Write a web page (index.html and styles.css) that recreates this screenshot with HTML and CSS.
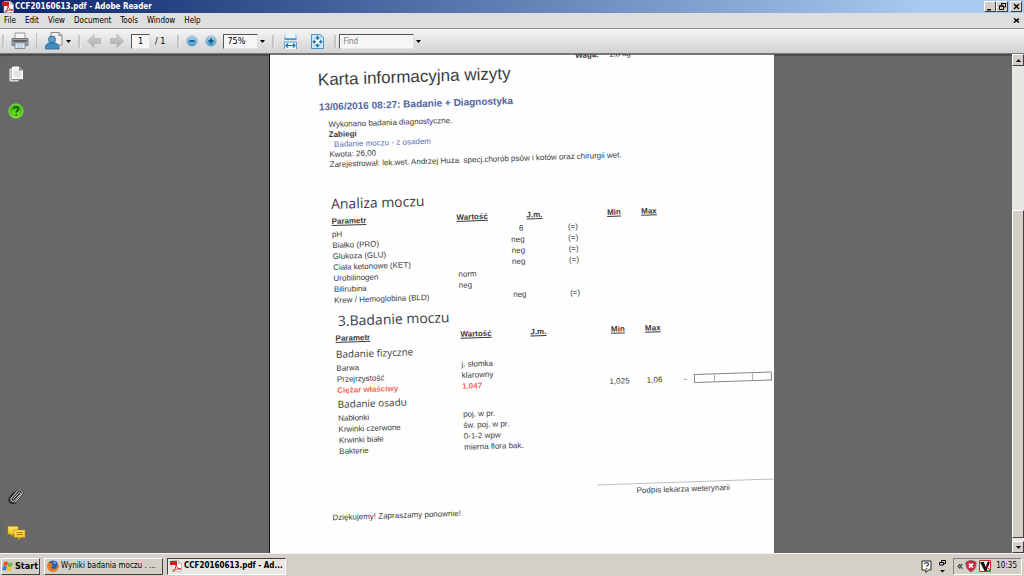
FILE: index.html
```html
<!DOCTYPE html>
<html lang="pl">
<head>
<meta charset="utf-8">
<title>CCF20160613.pdf - Adobe Reader</title>
<link rel="stylesheet" href="styles.css">
</head>
<body>
<svg class="defs" width="0" height="0" aria-hidden="true">
  <defs>
    <linearGradient id="blue" x1="0" y1="0" x2="0" y2="1"><stop offset="0" stop-color="#a9d8f2"/><stop offset="1" stop-color="#4396cc"/></linearGradient>
    <linearGradient id="grey" x1="0" y1="0" x2="0" y2="1"><stop offset="0" stop-color="#d4d4d4"/><stop offset="1" stop-color="#a8a8a8"/></linearGradient>
    <radialGradient id="green" cx=".5" cy=".7"><stop offset="0" stop-color="#7dec22"/><stop offset="1" stop-color="#3fb80d"/></radialGradient>
    <linearGradient id="gold" x1="0" y1="0" x2="0" y2="1"><stop offset="0" stop-color="#ffe66b"/><stop offset="1" stop-color="#f0b90f"/></linearGradient>
    <symbol id="pdf" viewBox="0 0 12 12">
      <path d="M2 .5h6.500l3 3v8H2z" fill="#fff" stroke="#aaa" stroke-width=".7"/>
      <path d="M8.500.5v3h3" fill="#ddd" stroke="#aaa" stroke-width=".7"/>
      <path d="M0 1h7v4H0z" fill="#d01c1c"/>
      <path d="M3 11c2-2 3-4 3-6 .3 2 2 4 5 4-3-.4-6 .5-8 2" fill="none" stroke="#d01c1c" stroke-width="1"/>
    </symbol>
  </defs>
</svg>
<div class="window">
  <header class="titlebar">
    <svg class="app-icon"><use href="#pdf"/></svg>
    <span class="title">CCF20160613.pdf - Adobe Reader</span>
    <button class="win-btn" aria-label="Minimize"><svg viewBox="0 0 9 9"><path d="M1 7h4v1.500H1z"/></svg></button>
    <button class="win-btn" aria-label="Restore"><svg viewBox="0 0 9 9"><path d="M3.500 3V1.500h4v3.500H6M1.500 4h4v3.500h-4z" fill="none" stroke="#000"/><path d="M3 1h5v1H3zM1 3.500h5v1H1z"/></svg></button>
    <button class="win-btn close" aria-label="Close"><svg viewBox="0 0 9 9"><path d="M2 2l5 5M7 2l-5 5" stroke="#000" stroke-width="1.300"/></svg></button>
  </header>
  <nav class="menubar">
    <button>File</button><button>Edit</button><button>View</button><button>Document</button><button>Tools</button><button>Window</button><button>Help</button>
    <button class="doc-close" aria-label="Close document"><svg viewBox="0 0 7 7"><path d="M1 1.500l5 4M6 1.500l-5 4" stroke="#000" stroke-width="1.600"/></svg></button>
  </nav>
  <div class="toolbar">
    <div class="group">
      <i class="grip"></i>
      <button class="tool print" aria-label="Print"><svg viewBox="0 0 18 18"><path d="M4 1h10v6H4z" fill="#f5f5f5" stroke="#999"/><path d="M1 6.500h16v7H1z" fill="#9ba2a7" stroke="#777e83"/><path d="M2 8h14v2H2z" fill="#5c6367"/><path d="M4 11h10v5.500H4z" fill="#fbfbfb" stroke="#888"/><path d="M5.500 13h7M5.500 15h7" stroke="#7db4d8"/></svg></button>
      <i class="rule"></i>
      <button class="tool share" aria-label="Collaborate"><svg viewBox="0 0 18 18"><path d="M6 .5h8l3 3V13H6z" fill="#eee" stroke="#8b8b8b"/><path d="M14 .5v3h3" fill="none" stroke="#8b8b8b"/><circle cx="7" cy="7.500" r="3.500" fill="#59a0d0" stroke="#25648f" stroke-width=".8"/><path d="M.5 17v-3.500l3-2.500h7.500l3 2.500V17z" fill="#3f8cc2" stroke="#25648f" stroke-width=".8"/></svg></button>
      <svg class="caret" viewBox="0 0 5 3"><path d="M0 0h5L2.500 3z"/></svg>
    </div>
    <div class="group">
      <i class="grip"></i>
      <button class="tool back" aria-label="Previous page"><svg viewBox="0 0 14 14"><path d="M.5 7l6.500-6.500v4h6.500v5H7v4z" fill="url(#grey)" stroke="#b8b8b8"/></svg></button>
      <button class="tool next" aria-label="Next page"><svg viewBox="0 0 14 14"><path d="M13.500 7L7 .5v4H.5v5H7v4z" fill="url(#grey)" stroke="#b8b8b8"/></svg></button>
      <input class="field page-no" type="text" value="1" aria-label="Page">
      <span class="page-count">/ 1</span>
    </div>
    <div class="group">
      <i class="grip"></i>
      <button class="tool round" aria-label="Zoom out"><svg viewBox="0 0 12 12"><circle cx="6" cy="6" r="5.300" fill="url(#blue)" stroke="#9ab4c4" stroke-width=".8"/><path d="M3.300 6h5.400" stroke="#0d4f82" stroke-width="1.600"/></svg></button>
      <button class="tool round" aria-label="Zoom in"><svg viewBox="0 0 12 12"><circle cx="6" cy="6" r="5.300" fill="url(#blue)" stroke="#9ab4c4" stroke-width=".8"/><path d="M3.300 6h5.400M6 3.300v5.400" stroke="#0d4f82" stroke-width="1.600"/></svg></button>
      <select class="field zoom" aria-label="Zoom"><option>75%</option></select>
      <svg class="caret tight" viewBox="0 0 5 3"><path d="M0 0h5L2.500 3z"/></svg>
    </div>
    <div class="group">
      <i class="grip"></i>
      <button class="tool fit" aria-label="Fit width"><svg viewBox="0 0 13 15"><path d="M.5 0h12v6H.5z" fill="url(#blue)"/><path d="M1.500 0h10v4h-10z" fill="#eaf5fb"/><path d="M.5 15V8h12v7" fill="#edf7fc" stroke="#5ea3ce"/><path d="M2 11.500h9M4 9.500l-2 2 2 2M9 9.500l2 2-2 2" fill="none" stroke="#186fab" stroke-width="1.100"/></svg></button>
      <button class="tool fit" aria-label="Fit page"><svg viewBox="0 0 13 15"><path d="M.5.5h9l3 3v11H.5z" fill="#cfe7f5" stroke="#4a97c7"/><path d="M9.500.5v3h3z" fill="#7dbbe0"/><path d="M4 5.500h5v4.500H4z" fill="#fff"/><path d="M6.500 1.500L9 4.500H7.200V6H5.800V4.500H4zM6.500 13.500L4 10.700h1.800V9.500h1.400v1.200H9zM1.300 7.700L3.800 5.500V7H5v1.400H3.800V10zM11.700 7.700L9.200 5.500V7H8v1.400h1.200V10z" fill="#1f74ae"/></svg></button>
    </div>
    <div class="group">
      <i class="grip"></i>
      <input class="field find" type="text" placeholder="Find" aria-label="Find">
      <svg class="caret tight" viewBox="0 0 5 3"><path d="M0 0h5L2.500 3z"/></svg>
    </div>
  </div>
  <main class="viewer">
    <aside class="sidebar">
      <button class="side" aria-label="Pages"><svg viewBox="0 0 16 16"><path d="M2 3h8v12H2z" fill="#bbb" stroke="#eee"/><path d="M4.500 1H11l3.500 3.500v8.500h-10z" fill="#f2f2f2" stroke="#fff"/><path d="M4 13.500h11" stroke="#888"/><path d="M11 1v3.500h3.500z" fill="#777"/><path d="M6 6h7M6 8h7M6 10h7" stroke="#d4d4d4"/></svg></button>
      <button class="side help" aria-label="Help"><svg viewBox="0 0 16 16"><circle cx="8" cy="8" r="7" fill="url(#green)" stroke="#8df24d"/><path d="M5.700 6.300c0-3 4.700-2.700 4.700-.2 0 1.600-2.200 1.600-2.200 3.300M8.200 10.800v1.600" fill="none" stroke="#135a05" stroke-width="1.800"/></svg></button>
      <button class="side clip" aria-label="Attachments"><svg viewBox="0 0 16 16"><g fill="none" stroke-linecap="round" stroke-linejoin="round"><path d="M5.500 10.500l5-5.500c1.300-1.300 2.800.2 1.700 1.500l-5.500 6.300c-2 2-5-.3-3.300-2.600L9.500 2.800c2.400-2.400 6.300.6 4.300 3.400L7.500 14c-3 3-8-.8-5.500-4.300L6 5" stroke="#2e2e2e" stroke-width="2.200"/><path d="M5.500 10.500l5-5.500c1.300-1.300 2.800.2 1.700 1.500l-5.500 6.300c-2 2-5-.3-3.300-2.600L9.500 2.800c2.400-2.400 6.300.6 4.300 3.400L7.500 14" stroke="#dedede"/></g></svg></button>
      <button class="side" aria-label="Comments"><svg viewBox="0 0 16 16"><path d="M0 1.500h10v7.500H5.500l-2 2.500V9H0z" fill="url(#gold)" stroke="#d79b09" stroke-width=".6"/><path d="M6 5h11v7.500h-4.500l-2 3v-3H6z" fill="url(#gold)" stroke="#b98005" stroke-width=".6"/><path d="M8.500 7.500h6.500M8.500 9.500h6.500" stroke="#af7b05"/></svg></button>
    </aside>
    <div class="canvas">
      <article class="sheet">
        <div class="scan">
          <p class="weight"><b>Waga:</b><span>1,8 kg</span></p>
          <h1>Karta informacyjna wizyty</h1>
          <h2>13/06/2016 08:27: Badanie + Diagnostyka</h2>
          <div class="visit">
            <p>Wykonano badania diagnostyczne.</p>
            <p><b>Zabiegi</b></p>
            <p class="procedure">Badanie moczu - z osadem</p>
            <p>Kwota: 26,00</p>
            <p>Zarejestrował: lek.wet. Andrzej Huza&nbsp; specj.chorób psów i kotów oraz chirurgii wet.</p>
          </div>
          <section class="results">
            <h3>Analiza moczu</h3>
            <table>
              <colgroup><col class="c-name"><col class="c-value"><col class="c-unit"><col class="c-flag"><col class="c-limit"><col class="c-limit"><col class="c-dash"><col></colgroup>
              <thead><tr><th>Parametr</th><th>Wartość</th><th class="unit">J.m.</th><th></th><th class="limit">Min</th><th class="limit">Max</th><th></th><th></th></tr></thead>
              <tbody>
                <tr><td>pH</td><td></td><td class="digit">6</td><td>(=)</td></tr>
                <tr><td>Białko (PRO)</td><td></td><td>neg</td><td>(=)</td></tr>
                <tr><td>Glukoza (GLU)</td><td></td><td>neg</td><td>(=)</td></tr>
                <tr><td>Ciała ketonowe (KET)</td><td></td><td>neg</td><td>(=)</td></tr>
                <tr><td>Urobilinogen</td><td>norm</td></tr>
                <tr><td>Bilirubina</td><td>neg</td></tr>
                <tr><td>Krew / Hemoglobina (BLD)</td><td></td><td>neg</td><td>(=)</td></tr>
              </tbody>
            </table>
          </section>
          <section class="results second">
            <h3>3.Badanie moczu</h3>
            <table>
              <colgroup><col class="c-name"><col class="c-value"><col class="c-unit"><col class="c-flag"><col class="c-limit"><col class="c-limit"><col class="c-dash"><col></colgroup>
              <thead><tr><th>Parametr</th><th>Wartość</th><th class="unit">J.m.</th><th></th><th class="limit">Min</th><th class="limit">Max</th><th></th><th></th></tr></thead>
              <tbody>
                <tr><th class="section" colspan="8">Badanie fizyczne</th></tr>
                <tr><td>Barwa</td><td>j. słomka</td></tr>
                <tr><td>Przejrzystość</td><td>klarowny</td></tr>
                <tr><td class="alert">Ciężar właściwy</td><td class="alert">1.047</td><td></td><td></td><td class="limit">1,025</td><td class="limit">1,06</td><td class="dash">-</td><td><div class="range"><i></i><i></i><i></i></div></td></tr>
                <tr><th class="section" colspan="8">Badanie osadu</th></tr>
                <tr><td>Nabłonki</td><td>poj. w pr.</td></tr>
                <tr><td>Krwinki czerwone</td><td>św. poj. w pr.</td></tr>
                <tr><td>Krwinki białe</td><td>0-1-2 wpw</td></tr>
                <tr><td>Bakterie</td><td>mierna flora bak.</td></tr>
              </tbody>
            </table>
          </section>
          <p class="signature">Podpis lekarza weterynarii</p>
          <p class="thanks">Dziękujemy! Zapraszamy ponownie!</p>
        </div>
      </article>
    </div>
    <div class="scrollbar">
      <button class="arrow" aria-label="Scroll up"><svg viewBox="0 0 5 3"><path d="M0 3h5L2.500 0z"/></svg></button>
      <div class="track"><div class="thumb"></div></div>
      <button class="arrow" aria-label="Scroll down"><svg viewBox="0 0 5 3"><path d="M0 0h5L2.500 3z"/></svg></button>
    </div>
  </main>
  <footer class="taskbar">
    <button class="start"><svg viewBox="0 0 12 12"><path d="M2 2q2-1.200 4 0L5.200 6q-2-1.200-4.200 0z" fill="#e6512b"/><path d="M6.500 2.200q2 1.200 4.500 0l-1 4q-2 1-4.200 0z" fill="#70b843"/><path d="M1 6.500q2-1.200 4 0l-1 4q-2-1.200-4 0z" fill="#3e7bd0"/><path d="M5.500 6.800q2 1.200 4.300 0l-1 4q-2 1-4.200 0z" fill="#f4c025"/></svg>Start</button>
    <button class="task"><svg viewBox="0 0 12 12"><circle cx="6" cy="6" r="5.500" fill="#2d5da5"/><path d="M6 1.500c2 0 3 1 3.500 2L7 4z" fill="#72b4e4"/><path d="M1.500 2C0 5-.2 9 3 11c4 2 8-.5 8.500-4 .2-2-.5-3.500-1.500-4.500 1 3 0 6-3 6.500-2 0-3-1-3-2l2-1-1.500-1.500L5.500 3 3 3.200z" fill="#ed7a1c"/></svg><span>Wyniki badania moczu . ...</span></button>
    <button class="task active"><svg><use href="#pdf"/></svg><span>CCF20160613.pdf - Ad...</span></button>
    <div class="spacer"></div>
    <svg class="lang" viewBox="0 0 11 13"><path d="M1 1h9v9H7.500L5 12.500V10H1z" fill="#ffffe0" stroke="#222"/><path d="M3.700 4.200c0-2.200 3.800-2 3.800 0 0 1.300-1.800 1.200-1.800 2.600M5.700 8v1.200" fill="none" stroke="#2637b0" stroke-width="1.200"/></svg>
    <svg class="toggle" viewBox="0 0 7 13"><path d="M2.500 2V.5h4v3H5M.5 2.500h4v2.500h-4z" fill="none" stroke="#000"/><path d="M1 10h5L3.500 12.500z"/></svg>
    <div class="tray">
      <span class="more">«</span>
      <svg viewBox="0 0 12 12"><path d="M6 0l5 2c.5 5-1.500 8-5 10C2.500 10 .5 7 1 2z" fill="#c8263b" stroke="#777" stroke-width=".8"/><path d="M4 3.700l4 4M8 3.700l-4 4" stroke="#fff" stroke-width="1.700"/></svg>
      <svg viewBox="0 0 12 12"><path d="M.5.5h11v11H.5z" fill="#fff" stroke="#d22"/><path d="M1 2h4l1.500 5L8.500 2H11L7.500 11h-2z" fill="#111"/><path d="M7 6l4 4M9 1l2 2" stroke="#d22"/><path d="M8 10h4v2H8z" fill="#1ca545"/></svg>
      <time>10:35</time>
    </div>
  </footer>
</div>
</body>
</html>
```
FILE: styles.css
```css
* { box-sizing: border-box; }
body { margin: 0; }
button, input, select { font: inherit; color: inherit; margin: 0; border-radius: 0; }
button { padding: 0; border: 0; background: none; }
svg { display: block; flex: none; }
.defs { position: absolute; }

.window {
  display: flex;
  flex-direction: column;
  height: 100vh;
  overflow: hidden;
  background: #d4d0c8;
  color: #000;
  font: 8px/10px "DejaVu Sans Condensed", "DejaVu Sans", sans-serif;
}

.titlebar {
  display: flex;
  align-items: center;
  flex: none;
  height: 13px;
  padding: 0 2px;
  background: linear-gradient(90deg, #0a246a, #a6caf0 90%);
  color: #fff;
}
.app-icon { width: 12px; height: 12px; }
.title { flex: 1; padding-left: 1px; font-weight: bold; }
.win-btn {
  display: grid;
  place-items: center;
  width: 12px;
  height: 11px;
  background: #d4d0c8;
  border: 1px solid;
  border-color: #fff #404040 #404040 #fff;
}
.win-btn svg { width: 9px; height: 9px; }
.win-btn.close { margin-left: 2px; }

.menubar {
  display: flex;
  align-items: center;
  gap: 9px;
  flex: none;
  height: 15px;
  padding: 0 4px;
  background: #dedede;
}
.doc-close { margin-left: auto; }
.doc-close svg { width: 7px; height: 7px; }

.toolbar {
  display: flex;
  align-items: center;
  flex: none;
  gap: 7px;
  height: 26px;
  padding: 0 2px;
  border-top: 1px solid #8f8d88;
  border-bottom: 1px solid #777;
  background: linear-gradient(#f4f4f4, #d2d2d2);
  font-size: 9px;
}
.group { display: flex; align-items: center; }
.grip { width: 3px; height: 13px; background: #c6c6c6; border-right: 1px solid #eee; }
.rule { width: 1px; height: 16px; background: #bbb; }
.tool { flex: none; }
.tool svg { width: 100%; height: 100%; }
.print { width: 18px; height: 18px; margin: 0 7px 0 6px; }
.share { width: 18px; height: 18px; margin: 0 3px 0 8px; }
.back { width: 14px; height: 14px; margin: 0 9px 0 6px; }
.next { width: 14px; height: 14px; margin-right: 7px; }
.round { width: 12px; height: 12px; margin: 0 1px 0 6px; }
.fit { width: 13px; height: 15px; margin: 0 5px 0 9px; }
.fit + .fit { margin-right: 3px; }
.caret { width: 5px; height: 3px; }
.caret.tight { margin-left: 2px; }
.field {
  height: 15px;
  padding: 0 3px;
  border: 1px solid;
  border-color: #555 #e8e5d8 #e8e5d8 #555;
  background: #f6f6f6;
  outline: 0;
  appearance: none;
}
.page-no { width: 19px; padding: 0 6px; }
.page-count { padding: 0 5px; }
.zoom { width: 35px; margin-left: 5px; }
.find { width: 75px; margin-left: 2px; font-size: 8px; }
.find::placeholder { color: #777; opacity: 1; }

.viewer {
  display: flex;
  flex: 1;
  min-height: 0;
  background: #686868;
  box-shadow: inset 0 2px 1px #4c4c4c;
}
.sidebar {
  display: flex;
  flex-direction: column;
  align-items: center;
  width: 31px;
  padding: 12px 0;
}
.side { width: 16px; height: 16px; }
.side svg { width: 100%; height: 100%; overflow: visible; }
.help { margin-top: 21px; }
.clip { margin: auto 0 21px; }
.canvas { display: flex; justify-content: center; flex: 1; overflow: hidden; }
.sheet {
  width: 505px;
  overflow: hidden;
  border-left: 1px solid #111;
  background: #fefefe;
  box-shadow: inset 0 1px #777;
}

/* The scanned page lies slightly askew on the glass. */
.scan {
  padding: 7px 13px 0 47px;
  transform: rotate(-1.9deg);
  transform-origin: 0 0;
  color: #3c3c40;
  font: 8px/10px "Liberation Sans", Arial, sans-serif;
}
.scan p, .scan h1, .scan h2, .scan h3 { margin: 0; }
.weight { display: flex; gap: 10px; padding-left: 258px; }
.scan h1 { font-size: 17px; line-height: 22px; font-weight: normal; }
.scan .visit { margin: 6px 0 24px 9px; white-space: nowrap; }
.scan h2 { margin-top: 9px; font-size: 10px; line-height: 14px; color: #50659d; }
.procedure { padding-left: 5px; color: #5f73b4; }
.results { margin-left: 9px; }
.results.second { margin-top: 5px; }
.results h3 {
  font: 14px/20px "Open Sans", "Noto Sans", sans-serif;
}
.second h3 { padding-left: 3px; }
table { width: 100%; table-layout: fixed; border-collapse: collapse; }
th, td { padding: 0; text-align: left; line-height: 11px; height: 11px; white-space: nowrap; }
thead th { height: 15px; text-decoration: underline; }
th.unit { padding-left: 16px; }
td.digit { padding-left: 8px; }
td.dash { padding-left: 12px; }
th.limit, td.limit { text-align: center; }
.c-name { width: 125px; }
.c-value { width: 54px; }
.c-unit { width: 57px; }
.c-flag { width: 29px; }
.c-limit { width: 35px; }
.c-dash { width: 22px; }
th.section { height: 17px; font: 10px/17px "Open Sans", "Noto Sans", sans-serif; }
.alert { color: #f4695c; font-weight: bold; }
.range { display: flex; height: 9px; border: 1px solid #7d8790; }
.range i { flex: 1; }
.range i:nth-child(2) { flex: 2; border: solid #a8b0aa; border-width: 0 1px; }
.scan .signature {
  width: 178px;
  margin: 36px 0 7px auto;
  padding: 2px 0 0 39px;
  border-top: 1px solid #b9c1c4;
}

.scrollbar { display: flex; flex-direction: column; width: 12px; background: #e9e7e2; }
.arrow, .thumb {
  background: #d4d0c8;
  border: 1px solid;
  border-color: #fff #404040 #404040 #fff;
}
.arrow { display: grid; place-items: center; height: 12px; }
.arrow svg { width: 5px; height: 3px; }
.track { display: flex; flex-direction: column; flex: 1; padding: 144px 0 3px; }
.thumb { flex: 1; }

.taskbar {
  display: flex;
  align-items: center;
  flex: none;
  gap: 4px;
  height: 23px;
  padding: 2px 2px 0 1px;
  border-top: 1px solid #f4f3f0;
  background: #d4d0c8;
}
.start, .task {
  display: flex;
  align-items: center;
  gap: 2px;
  height: 17px;
  padding: 0 2px;
  background: #d4d0c8;
  border: 1px solid;
  border-color: #fff #404040 #404040 #fff;
}
.start { width: 39px; padding: 0; gap: 1px; font-size: 9px; font-weight: bold; }
.start svg, .task svg, .tray svg { width: 12px; height: 12px; }
.task { width: 119px; white-space: nowrap; overflow: hidden; }
.task.active { border-color: #404040 #fff #fff #404040; background: #eae8e4; font-weight: bold; }
.spacer { flex: 1; }
.lang { width: 11px; height: 13px; }
.toggle { width: 7px; height: 13px; margin: 0 3px; }
.tray {
  display: flex;
  align-items: center;
  gap: 2px;
  height: 17px;
  padding: 0 4px 0 3px;
  border: 1px solid;
  border-color: #808080 #fff #fff #808080;
}
.more { font-size: 12px; }
.tray time { padding-left: 3px; }
```
